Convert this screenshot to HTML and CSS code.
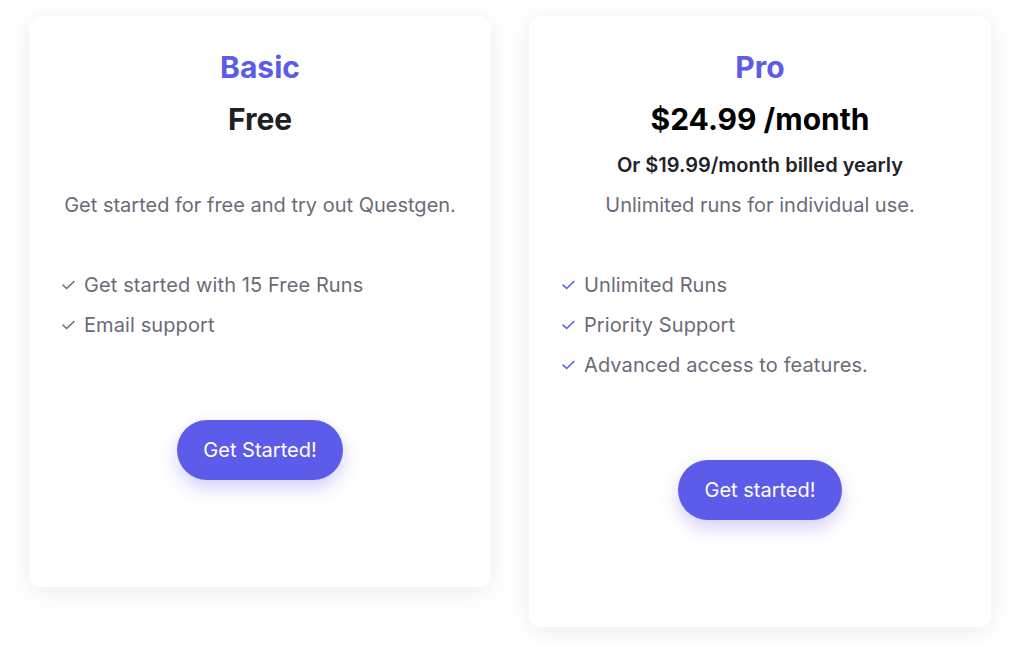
FILE: index.html
```html
<!DOCTYPE html>
<html>
<head>
<meta charset="utf-8">
<link rel="stylesheet" href="styles.css">
</head>
<body>
<div class="plans">
  <div class="card">
    <h2 class="name">Basic</h2>
    <div class="price">Free</div>
    <div class="sub"></div>
    <p class="desc">Get started for free and try out Questgen.</p>
    <ul class="features">
      <li><svg class="check" viewBox="0 0 12 9"><path d="M1 4.6 L4.3 7.8 L11 1.2"/></svg>Get started with 15 Free Runs</li>
      <li><svg class="check" viewBox="0 0 12 9"><path d="M1 4.6 L4.3 7.8 L11 1.2"/></svg>Email support</li>
    </ul>
    <div class="action"><button class="btn">Get Started!</button></div>
  </div>
  <div class="card pro">
    <h2 class="name">Pro</h2>
    <div class="price">$24.99 /month</div>
    <div class="sub">Or $19.99/month billed yearly</div>
    <p class="desc">Unlimited runs for individual use.</p>
    <ul class="features">
      <li><svg class="check" viewBox="0 0 12 9"><path d="M1 4.6 L4.3 7.8 L11 1.2"/></svg>Unlimited Runs</li>
      <li><svg class="check" viewBox="0 0 12 9"><path d="M1 4.6 L4.3 7.8 L11 1.2"/></svg>Priority Support</li>
      <li><svg class="check" viewBox="0 0 12 9"><path d="M1 4.6 L4.3 7.8 L11 1.2"/></svg>Advanced access to features.</li>
    </ul>
    <div class="action"><button class="btn">Get started!</button></div>
  </div>
</div>
</body>
</html>
```
FILE: styles.css
```css
html, body {
  margin: 0;
  background: #fefefe;
  font-family: Inter, "Noto Sans", sans-serif;
}
.plans {
  display: flex;
  align-items: flex-start;
  gap: 38px;
  padding: 16px 29px;
}
.card {
  width: 462px;
  box-sizing: border-box;
  background: #fff;
  border-radius: 12px;
  box-shadow: 0 4px 22px rgba(0, 0, 0, 0.07);
  padding: 33px 33px 107px;
}
.name {
  margin: 0;
  text-align: center;
  font-size: 30px;
  line-height: 36px;
  font-weight: 700;
  color: #5c5ce8;
}
.price {
  margin-top: 16px;
  text-align: center;
  font-size: 30px;
  line-height: 36px;
  font-weight: 700;
  color: #1f2024;
}
.pro .price {
  color: #000;
}
.sub {
  margin-top: 14px;
  min-height: 28px;
  text-align: center;
  font-size: 20px;
  line-height: 28px;
  font-weight: 600;
  color: #222328;
}
.desc {
  margin: 12px 0 0;
  text-align: center;
  font-size: 20px;
  line-height: 28px;
  color: #6b6b78;
}
.features {
  list-style: none;
  margin: 46px 0 0;
  padding: 0;
}
.features li {
  display: flex;
  align-items: center;
  gap: 9px;
  height: 40px;
  font-size: 20px;
  letter-spacing: 0.1px;
  color: #6b6b78;
}
.check {
  width: 13px;
  height: 10px;
  fill: none;
  stroke: #6b6b78;
  stroke-width: 1.4;
  stroke-linecap: round;
  stroke-linejoin: round;
}
.pro .check {
  stroke: #5c5ce8;
}
.action {
  display: flex;
  justify-content: center;
  margin-top: 75px;
}
.btn {
  height: 60px;
  padding: 0 26px;
  border: none;
  border-radius: 30px;
  background: #5d5bea;
  color: #fff;
  font-family: Inter, "Noto Sans", sans-serif;
  font-size: 20px;
  box-shadow: 0 8px 18px rgba(93, 91, 234, 0.28);
}
```
